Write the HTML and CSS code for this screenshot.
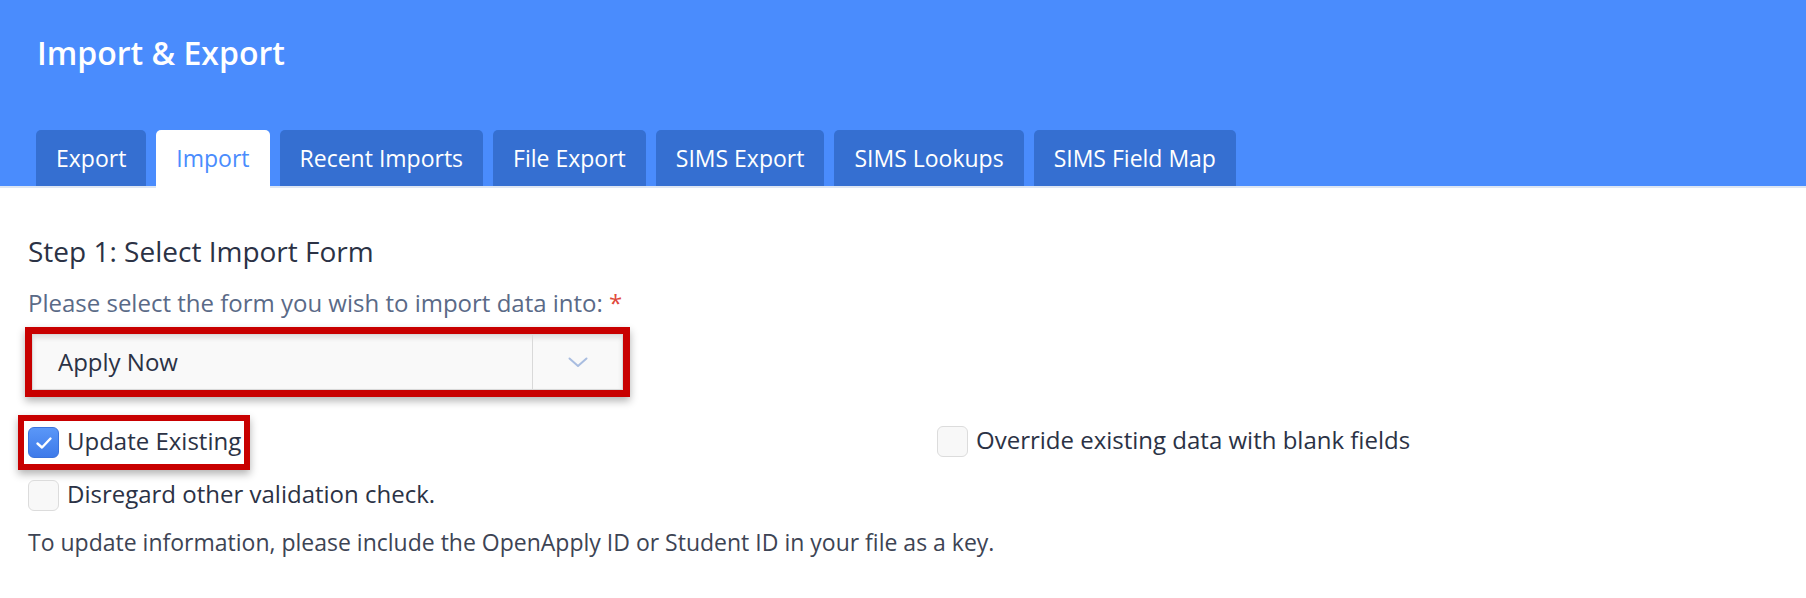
FILE: index.html
```html
<!DOCTYPE html>
<html lang="en">
<head>
<meta charset="utf-8">
<title>Import &amp; Export</title>
<link rel="stylesheet" href="styles.css">
</head>
<body>
<header class="hero">
  <h1 class="hero-title">Import &amp; Export</h1>
  <nav class="tabs">
    <a class="tab">Export</a>
    <a class="tab tab-active">Import</a>
    <a class="tab">Recent Imports</a>
    <a class="tab">File Export</a>
    <a class="tab">SIMS Export</a>
    <a class="tab">SIMS Lookups</a>
    <a class="tab">SIMS Field Map</a>
  </nav>
</header>
<main class="content">
  <h2 class="step">Step 1: Select Import Form</h2>
  <div class="field-label">Please select the form you wish to import data into: <span class="req">*</span></div>
  <div class="annot annot-select">
    <div class="select">
      <span class="select-value">Apply Now</span>
      <span class="select-arrow">
        <svg width="20" height="11" viewBox="0 0 20 11"><path d="M1.5 1.5 L10 9 L18.5 1.5" fill="none" stroke="#a9bde0" stroke-width="2" stroke-linecap="round" stroke-linejoin="round"/></svg>
      </span>
    </div>
  </div>
  <div class="options">
    <div class="annot annot-check">
      <label class="check"><span class="box box-on"><svg width="20" height="16" viewBox="0 0 20 16"><path d="M3.5 8.5 L8 12.5 L16.5 3.5" fill="none" stroke="#fff" stroke-width="2.4" stroke-linecap="round" stroke-linejoin="round"/></svg></span><span class="check-text">Update Existing</span></label>
    </div>
    <label class="check check-col2"><span class="box"></span><span class="check-text">Override existing data with blank fields</span></label>
    <label class="check"><span class="box"></span><span class="check-text">Disregard other validation check.</span></label>
  </div>
  <p class="note">To update information, please include the OpenApply ID or Student ID in your file as a key.</p>
</main>
</body>
</html>
```

FILE: styles.css
```css
* { box-sizing: border-box; }

body {
  margin: 0;
  background: #ffffff;
  font-family: "Open Sans", "Liberation Sans", sans-serif;
  color: #2b3245;
}

.hero {
  background: #4a8cfd;
  padding: 33px 0 0 36px;
}

.hero-title {
  margin: 0 0 57px 1px;
  font-size: 32px;
  line-height: 40px;
  font-weight: 600;
  color: #ffffff;
}

.tabs {
  display: flex;
  gap: 10px;
  align-items: flex-start;
  height: 56px;
}

.tab {
  display: block;
  height: 56px;
  padding: 0 20px;
  background: #356fd1;
  color: #ffffff;
  font-size: 23px;
  line-height: 56px;
  border-radius: 5px 5px 0 0;
  white-space: nowrap;
}

.tab-active {
  position: relative;
  height: 58px;
  background: #ffffff;
  color: #4a8cfd;
}

.content {
  border-top: 2px solid #dde6f3;
  padding: 45px 28px 0 28px;
}

.step {
  margin: 0;
  font-size: 28px;
  line-height: 36px;
  font-weight: 400;
  color: #2b3245;
}

.field-label {
  margin-top: 18px;
  font-size: 24px;
  line-height: 32px;
  color: #5a6a87;
}

.req { color: #e0493b; }

.annot {
  border: 7px solid #c80000;
  box-shadow: 0 4px 8px rgba(0, 0, 0, 0.3);
}

.annot-select {
  margin: 8px 0 0 -3px;
  width: 605px;
}

.select {
  display: flex;
  height: 56px;
  background: #f9f9f9;
  border: 1px solid #d9d9d9;
  box-shadow: inset 0 3px 5px rgba(0, 0, 0, 0.1);
}

.select-value {
  flex: 1;
  padding-left: 25px;
  font-size: 24px;
  line-height: 54px;
  color: #2b3245;
}

.select-arrow {
  width: 90px;
  border-left: 1px solid #d9d9d9;
  display: flex;
  align-items: center;
  justify-content: center;
}

.options {
  margin-top: 18px;
  display: grid;
  grid-template-columns: 909px auto;
  row-gap: 10px;
  align-items: center;
}

.annot-check {
  justify-self: start;
  margin-left: -10px;
  border-width: 6px;
  padding: 6px 3px 6px 4px;
}

.check {
  display: flex;
  align-items: center;
  gap: 8px;
  font-size: 24px;
  line-height: 31px;
  color: #2b3245;
  white-space: nowrap;
}

.check-col2 { margin-top: -2px; }

.check-text { margin-top: -4px; }

.box {
  flex: none;
  width: 31px;
  height: 31px;
  border-radius: 6px;
  background: #f8f8f8;
  border: 1.5px solid #dcdcdc;
  display: flex;
  align-items: center;
  justify-content: center;
}

.box-on {
  background: linear-gradient(#5a97f8, #3e7ae9);
  border-color: #3b73dc;
}

.note {
  margin: 16px 0 0 0;
  font-size: 23px;
  line-height: 30px;
  color: #3d4454;
}
```
